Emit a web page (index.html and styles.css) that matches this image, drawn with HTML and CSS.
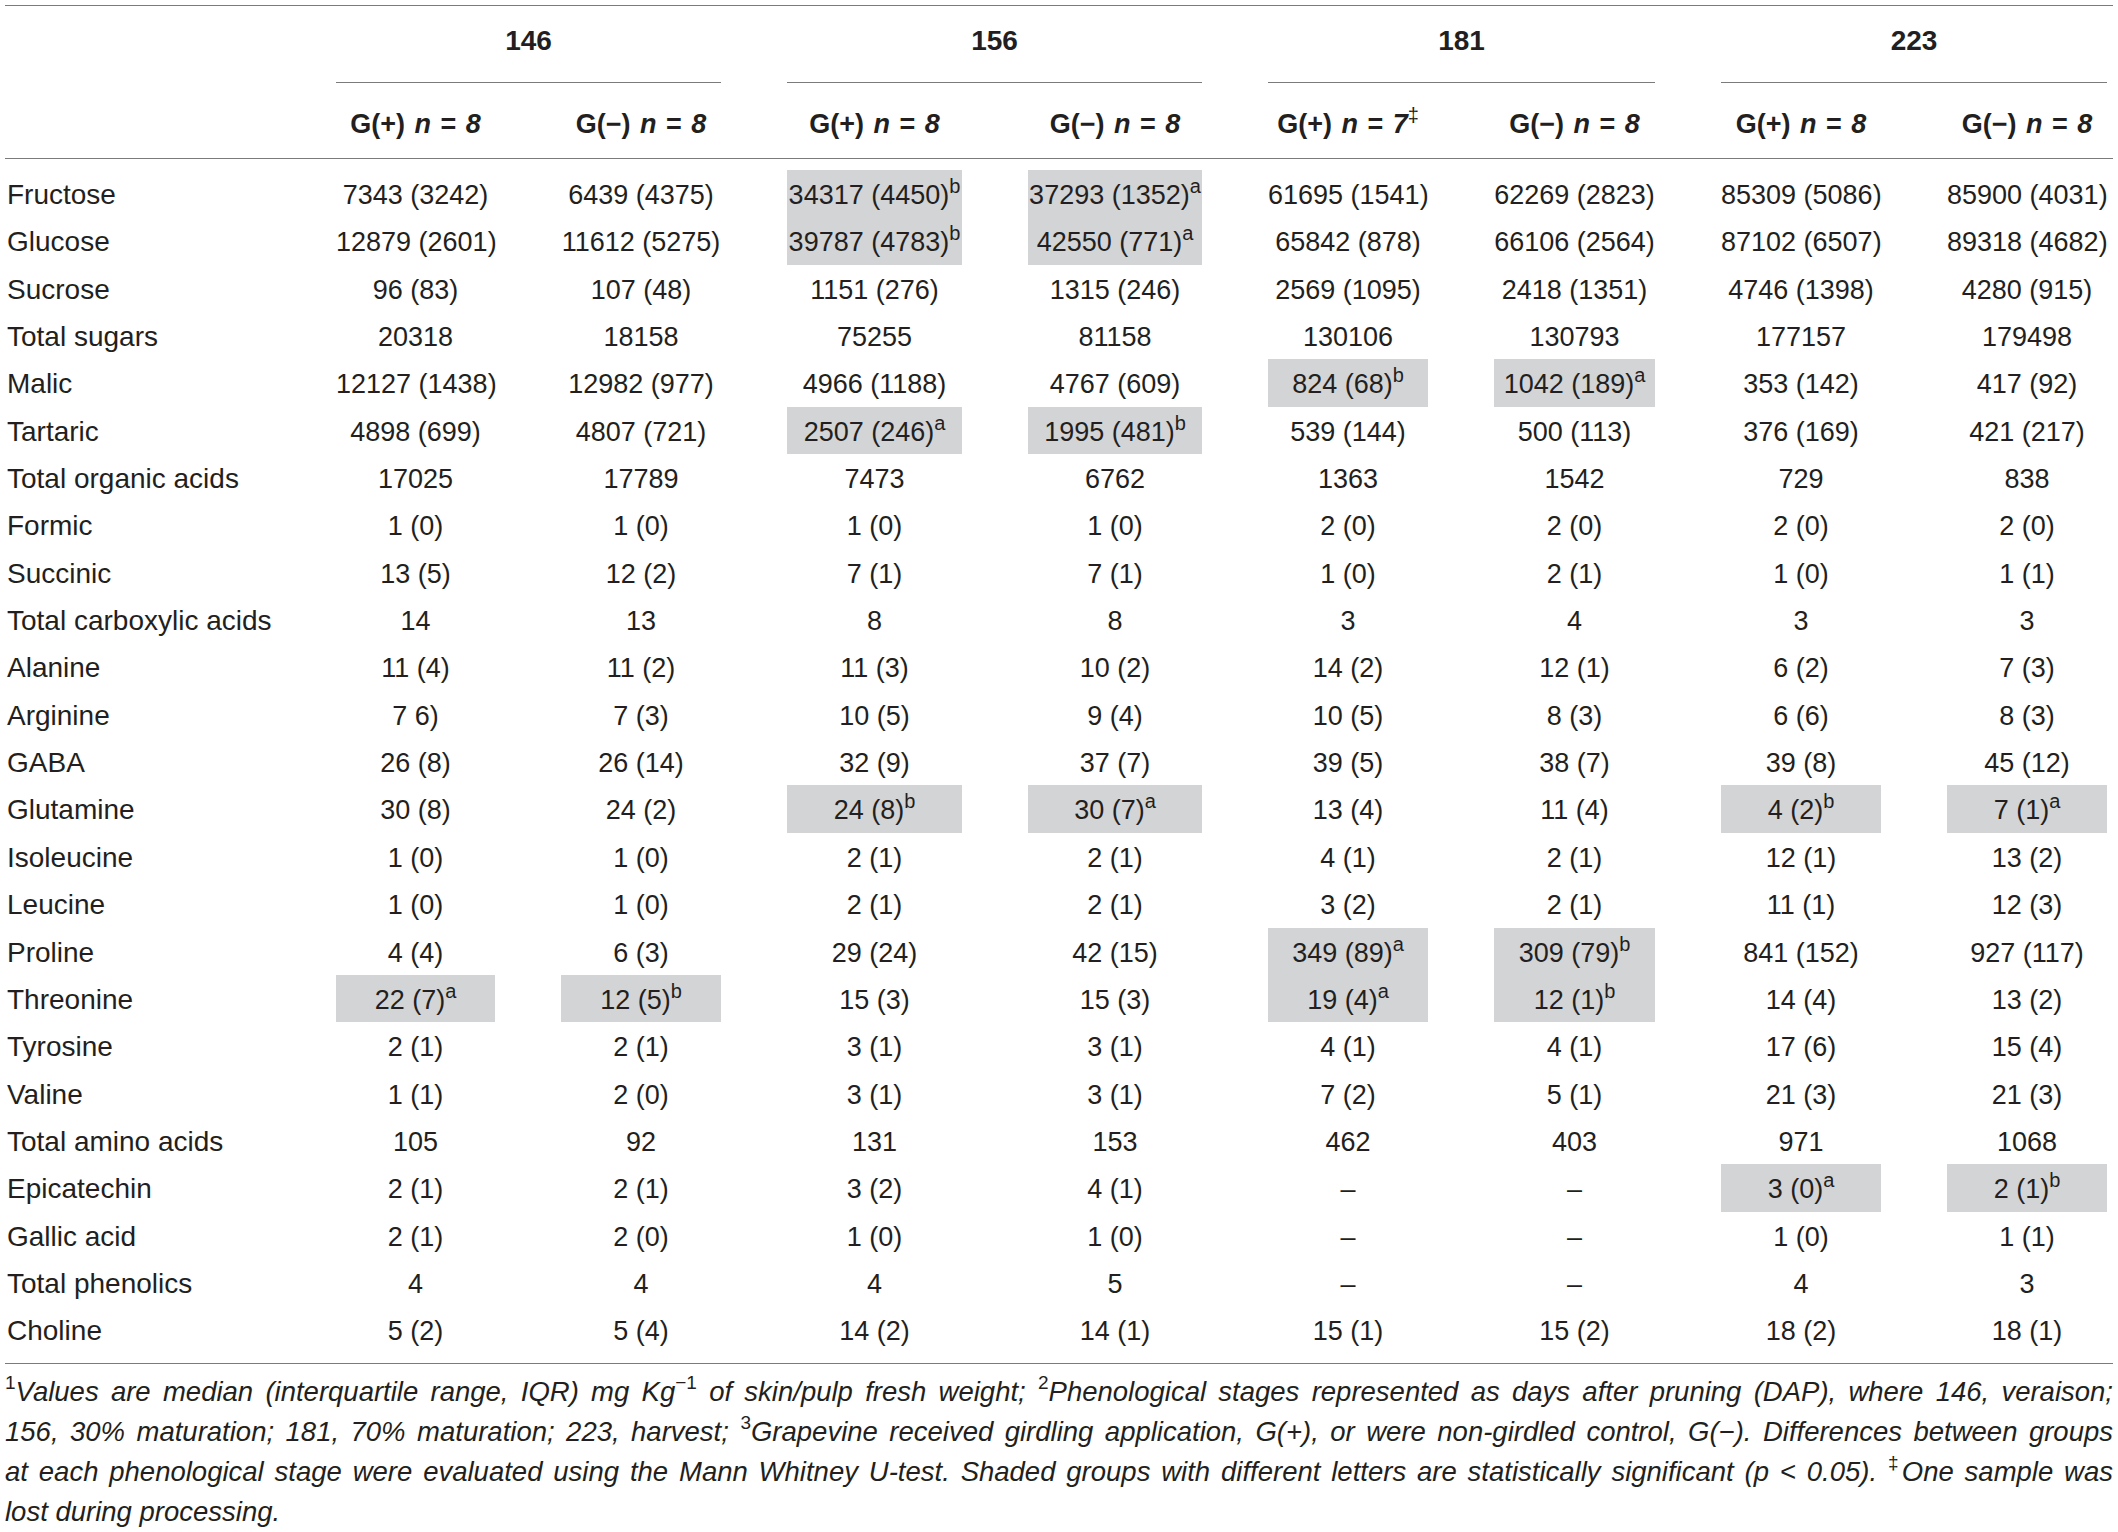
FILE: index.html
```html
<!DOCTYPE html>
<html lang="en">
<head>
<meta charset="utf-8">
<title>Table</title>
<link rel="stylesheet" href="styles.css">
</head>
<body>
<div class="tbl">
  <div class="grid thead">
    <div class="blank"></div>
    <div class="stage">146</div>
    <div class="stage">156</div>
    <div class="stage">181</div>
    <div class="stage">223</div>
    <div class="blank"></div>
    <div class="grp">G(+) <i>n</i> = <i>8</i></div>
    <div class="grp">G(−) <i>n</i> = <i>8</i></div>
    <div class="grp">G(+) <i>n</i> = <i>8</i></div>
    <div class="grp">G(−) <i>n</i> = <i>8</i></div>
    <div class="grp">G(+) <i>n</i> = <i>7</i><sup class="hs">‡</sup></div>
    <div class="grp">G(−) <i>n</i> = <i>8</i></div>
    <div class="grp">G(+) <i>n</i> = <i>8</i></div>
    <div class="grp">G(−) <i>n</i> = <i>8</i></div>
  </div>
  <div class="grid tbody">
    <div class="lab">Fructose</div><div class="c">7343 (3242)</div><div class="c">6439 (4375)</div><div class="c s">34317 (4450)<sup class="l">b</sup></div><div class="c s">37293 (1352)<sup class="l">a</sup></div><div class="c">61695 (1541)</div><div class="c">62269 (2823)</div><div class="c">85309 (5086)</div><div class="c">85900 (4031)</div>
    <div class="lab">Glucose</div><div class="c">12879 (2601)</div><div class="c">11612 (5275)</div><div class="c s">39787 (4783)<sup class="l">b</sup></div><div class="c s">42550 (771)<sup class="l">a</sup></div><div class="c">65842 (878)</div><div class="c">66106 (2564)</div><div class="c">87102 (6507)</div><div class="c">89318 (4682)</div>
    <div class="lab">Sucrose</div><div class="c">96 (83)</div><div class="c">107 (48)</div><div class="c">1151 (276)</div><div class="c">1315 (246)</div><div class="c">2569 (1095)</div><div class="c">2418 (1351)</div><div class="c">4746 (1398)</div><div class="c">4280 (915)</div>
    <div class="lab">Total sugars</div><div class="c">20318</div><div class="c">18158</div><div class="c">75255</div><div class="c">81158</div><div class="c">130106</div><div class="c">130793</div><div class="c">177157</div><div class="c">179498</div>
    <div class="lab">Malic</div><div class="c">12127 (1438)</div><div class="c">12982 (977)</div><div class="c">4966 (1188)</div><div class="c">4767 (609)</div><div class="c s">824 (68)<sup class="l">b</sup></div><div class="c s">1042 (189)<sup class="l">a</sup></div><div class="c">353 (142)</div><div class="c">417 (92)</div>
    <div class="lab">Tartaric</div><div class="c">4898 (699)</div><div class="c">4807 (721)</div><div class="c s">2507 (246)<sup class="l">a</sup></div><div class="c s">1995 (481)<sup class="l">b</sup></div><div class="c">539 (144)</div><div class="c">500 (113)</div><div class="c">376 (169)</div><div class="c">421 (217)</div>
    <div class="lab">Total organic acids</div><div class="c">17025</div><div class="c">17789</div><div class="c">7473</div><div class="c">6762</div><div class="c">1363</div><div class="c">1542</div><div class="c">729</div><div class="c">838</div>
    <div class="lab">Formic</div><div class="c">1 (0)</div><div class="c">1 (0)</div><div class="c">1 (0)</div><div class="c">1 (0)</div><div class="c">2 (0)</div><div class="c">2 (0)</div><div class="c">2 (0)</div><div class="c">2 (0)</div>
    <div class="lab">Succinic</div><div class="c">13 (5)</div><div class="c">12 (2)</div><div class="c">7 (1)</div><div class="c">7 (1)</div><div class="c">1 (0)</div><div class="c">2 (1)</div><div class="c">1 (0)</div><div class="c">1 (1)</div>
    <div class="lab">Total carboxylic acids</div><div class="c">14</div><div class="c">13</div><div class="c">8</div><div class="c">8</div><div class="c">3</div><div class="c">4</div><div class="c">3</div><div class="c">3</div>
    <div class="lab">Alanine</div><div class="c">11 (4)</div><div class="c">11 (2)</div><div class="c">11 (3)</div><div class="c">10 (2)</div><div class="c">14 (2)</div><div class="c">12 (1)</div><div class="c">6 (2)</div><div class="c">7 (3)</div>
    <div class="lab">Arginine</div><div class="c">7 6)</div><div class="c">7 (3)</div><div class="c">10 (5)</div><div class="c">9 (4)</div><div class="c">10 (5)</div><div class="c">8 (3)</div><div class="c">6 (6)</div><div class="c">8 (3)</div>
    <div class="lab">GABA</div><div class="c">26 (8)</div><div class="c">26 (14)</div><div class="c">32 (9)</div><div class="c">37 (7)</div><div class="c">39 (5)</div><div class="c">38 (7)</div><div class="c">39 (8)</div><div class="c">45 (12)</div>
    <div class="lab">Glutamine</div><div class="c">30 (8)</div><div class="c">24 (2)</div><div class="c s">24 (8)<sup class="l">b</sup></div><div class="c s">30 (7)<sup class="l">a</sup></div><div class="c">13 (4)</div><div class="c">11 (4)</div><div class="c s">4 (2)<sup class="l">b</sup></div><div class="c s">7 (1)<sup class="l">a</sup></div>
    <div class="lab">Isoleucine</div><div class="c">1 (0)</div><div class="c">1 (0)</div><div class="c">2 (1)</div><div class="c">2 (1)</div><div class="c">4 (1)</div><div class="c">2 (1)</div><div class="c">12 (1)</div><div class="c">13 (2)</div>
    <div class="lab">Leucine</div><div class="c">1 (0)</div><div class="c">1 (0)</div><div class="c">2 (1)</div><div class="c">2 (1)</div><div class="c">3 (2)</div><div class="c">2 (1)</div><div class="c">11 (1)</div><div class="c">12 (3)</div>
    <div class="lab">Proline</div><div class="c">4 (4)</div><div class="c">6 (3)</div><div class="c">29 (24)</div><div class="c">42 (15)</div><div class="c s">349 (89)<sup class="l">a</sup></div><div class="c s">309 (79)<sup class="l">b</sup></div><div class="c">841 (152)</div><div class="c">927 (117)</div>
    <div class="lab">Threonine</div><div class="c s">22 (7)<sup class="l">a</sup></div><div class="c s">12 (5)<sup class="l">b</sup></div><div class="c">15 (3)</div><div class="c">15 (3)</div><div class="c s">19 (4)<sup class="l">a</sup></div><div class="c s">12 (1)<sup class="l">b</sup></div><div class="c">14 (4)</div><div class="c">13 (2)</div>
    <div class="lab">Tyrosine</div><div class="c">2 (1)</div><div class="c">2 (1)</div><div class="c">3 (1)</div><div class="c">3 (1)</div><div class="c">4 (1)</div><div class="c">4 (1)</div><div class="c">17 (6)</div><div class="c">15 (4)</div>
    <div class="lab">Valine</div><div class="c">1 (1)</div><div class="c">2 (0)</div><div class="c">3 (1)</div><div class="c">3 (1)</div><div class="c">7 (2)</div><div class="c">5 (1)</div><div class="c">21 (3)</div><div class="c">21 (3)</div>
    <div class="lab">Total amino acids</div><div class="c">105</div><div class="c">92</div><div class="c">131</div><div class="c">153</div><div class="c">462</div><div class="c">403</div><div class="c">971</div><div class="c">1068</div>
    <div class="lab">Epicatechin</div><div class="c">2 (1)</div><div class="c">2 (1)</div><div class="c">3 (2)</div><div class="c">4 (1)</div><div class="c">–</div><div class="c">–</div><div class="c s">3 (0)<sup class="l">a</sup></div><div class="c s">2 (1)<sup class="l">b</sup></div>
    <div class="lab">Gallic acid</div><div class="c">2 (1)</div><div class="c">2 (0)</div><div class="c">1 (0)</div><div class="c">1 (0)</div><div class="c">–</div><div class="c">–</div><div class="c">1 (0)</div><div class="c">1 (1)</div>
    <div class="lab">Total phenolics</div><div class="c">4</div><div class="c">4</div><div class="c">4</div><div class="c">5</div><div class="c">–</div><div class="c">–</div><div class="c">4</div><div class="c">3</div>
    <div class="lab">Choline</div><div class="c">5 (2)</div><div class="c">5 (4)</div><div class="c">14 (2)</div><div class="c">14 (1)</div><div class="c">15 (1)</div><div class="c">15 (2)</div><div class="c">18 (2)</div><div class="c">18 (1)</div>
  </div>
</div>
<div class="notes">
  <span class="line"><sup class="fs">1</sup>Values are median (interquartile range, IQR) mg Kg<sup class="fs">−1</sup> of skin/pulp fresh weight; <sup class="fs">2</sup>Phenological stages represented as days after pruning (DAP), where 146, veraison;</span>
  <span class="line">156, 30% maturation; 181, 70% maturation; 223, harvest; <sup class="fs">3</sup>Grapevine received girdling application, G(+), or were non-girdled control, G(−). Differences between groups</span>
  <span class="line">at each phenological stage were evaluated using the Mann Whitney U-test. Shaded groups with different letters are statistically significant (p &lt; 0.05). <sup class="fs">‡</sup>One sample was</span>
  <span class="line last">lost during processing.</span>
</div>
</body>
</html>
```

FILE: styles.css
```css
html, body {
  margin: 0;
  padding: 0;
  background: #ffffff;
}

body {
  color: #231f20;
  font-family: "Liberation Sans", Arial, sans-serif;
}

.tbl {
  margin: 5px 5px 0;
  width: 2108px;
}

.grid {
  display: grid;
  grid-template-columns: 265px 159px 160px 175px 174px 160px 161px 160px 160px;
  column-gap: 66px;
}

.thead {
  border-top: 1px solid #7b7b7b;
  border-bottom: 1px solid #7b7b7b;
}

.stage {
  grid-column: span 2;
  text-align: center;
  font-weight: bold;
  font-size: 28px;
  line-height: 30px;
  padding: 20px 0 26px;
  border-bottom: 1px solid #7b7b7b;
}

.grp {
  text-align: center;
  font-weight: bold;
  font-size: 27px;
  line-height: 30px;
  padding: 26px 0 19px;
  white-space: nowrap;
  word-spacing: 2px;
}

.grp i {
  font-style: italic;
}

.hs {
  font-size: 20px;
  line-height: 0;
  vertical-align: 11px;
  font-weight: normal;
}

.tbody {
  grid-auto-rows: 47.35px;
  padding: 11px 0 9.5px;
  border-bottom: 1px solid #7b7b7b;
}

.c,
.lab {
  padding-top: 3px;
  line-height: 44.35px;
  white-space: nowrap;
}

.c {
  text-align: center;
  font-size: 27px;
}

.lab {
  padding-left: 2px;
  font-size: 28px;
}

.s {
  background: #d3d4d6;
}

.l {
  font-size: 20px;
  line-height: 0;
  vertical-align: 11px;
}

.notes {
  margin: 8px 5px 0;
  width: 2108px;
  font-style: italic;
  font-size: 27.5px;
  line-height: 40px;
}

.line {
  display: block;
  text-align: justify;
  text-align-last: justify;
}

.line.last {
  text-align-last: left;
}

.fs {
  font-style: normal;
  font-size: 19px;
  line-height: 0;
  vertical-align: 12px;
}
```
